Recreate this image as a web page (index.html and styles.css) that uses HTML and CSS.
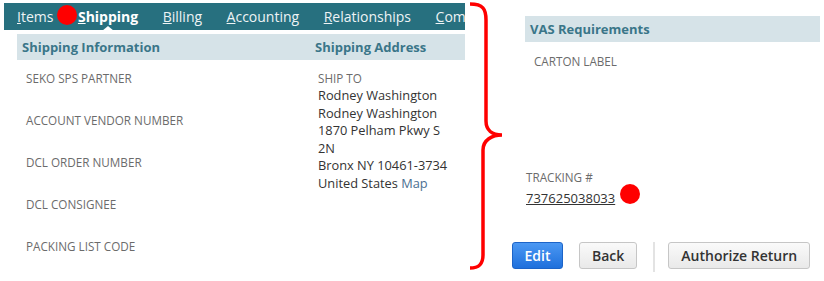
FILE: index.html
```html
<!DOCTYPE html>
<html lang="en">
<head>
  <meta charset="UTF-8" />
  <title>Shipping</title>
  <link rel="stylesheet" href="styles.css">
</head>
<body>
  <div class="page">
    <div class="left">
      <nav class="tabs">
        <span class="tab"><u>I</u>tems</span>
        <span class="tab active"><u>S</u>hipping</span>
        <span class="tab"><u>B</u>illing</span>
        <span class="tab"><u>A</u>ccounting</span>
        <span class="tab"><u>R</u>elationships</span>
        <span class="tab"><u>C</u>om</span>
      </nav>

      <div class="section">
        <div class="band">
          <span class="band-col">Shipping Information</span>
          <span class="band-col">Shipping Address</span>
        </div>
        <div class="fields">
          <div class="field-list">
            <div class="label">SEKO SPS PARTNER</div>
            <div class="label">ACCOUNT VENDOR NUMBER</div>
            <div class="label">DCL ORDER NUMBER</div>
            <div class="label">DCL CONSIGNEE</div>
            <div class="label">PACKING LIST CODE</div>
          </div>
          <div class="address">
            <div class="label">SHIP TO</div>
            <div class="value">
              Rodney Washington<br>
              Rodney Washington<br>
              1870 Pelham Pkwy S<br>
              2N<br>
              Bronx NY 10461-3734<br>
              United States <a href="#" class="map">Map</a>
            </div>
          </div>
        </div>
      </div>
    </div>

    <div class="right">
      <div class="band vas">VAS Requirements</div>
      <div class="label carton">CARTON LABEL</div>

      <div class="tracking">
        <div class="label">TRACKING #</div>
        <a href="#" class="track-num">737625038033</a>
      </div>

      <div class="actions">
        <button class="btn primary">Edit</button>
        <button class="btn">Back</button>
        <span class="divider"></span>
        <button class="btn">Authorize Return</button>
      </div>
    </div>
  </div>

  <!-- annotations drawn over the screenshot -->
  <svg class="marks" width="824" height="281">
    <path d="M470,4 C483,4 486,9 486,20 L486,121 C486,130 492,135 502,135 C492,135 483,140 483,150 L483,255 C483,264 479,268 470,268"
          fill="none" stroke="#f00" stroke-width="3.5" />
  </svg>
  <span class="dot dot-tab"></span>
  <span class="dot dot-track"></span>
</body>
</html>
```

FILE: styles.css
```css
:root {
  --teal: #27707f;
  --band: #d6e3e8;
  --band-text: #3a7689;
  --label: #6b6b6b;
  --text: #333;
}
body {
  margin: 0;
  font-family: 'Open Sans', sans-serif;
  background: #fff;
  color: var(--text);
}
.page {
  display: flex;
  padding: 3px 0 0 4px;
  width: 824px;
  height: 278px;
  box-sizing: border-box;
}
.left {
  width: 461px;
  flex-shrink: 0;
}

/* tabs */
.tabs {
  position: relative;
  display: flex;
  gap: 24.5px;
  height: 27px;
  align-items: center;
  padding-left: 13px;
  background: var(--teal);
  overflow: hidden;
  white-space: nowrap;
  font-size: 14px;
  color: #fff;
}
.tab {
  position: relative;
  opacity: 0.92;
}
.tab.active {
  font-weight: bold;
  opacity: 1;
}
.tab.active::after {
  content: '';
  position: absolute;
  left: 50%;
  bottom: -5px;
  margin-left: -6px;
  border: 6px solid transparent;
  border-bottom: 5px solid #fff;
  border-top: none;
}

/* shipping section */
.section {
  margin: 4px 0 0 13px;
}
.band {
  background: var(--band);
  color: var(--band-text);
  font-weight: bold;
  font-size: 13px;
  height: 26px;
  line-height: 26px;
}
.section .band {
  display: grid;
  grid-template-columns: 293px 1fr;
  padding-left: 5px;
}
.fields {
  display: grid;
  grid-template-columns: 301px 1fr;
  padding-top: 10px;
}
.label {
  font-size: 11.7px;
  color: var(--label);
  line-height: 17px;
}
.field-list {
  padding-left: 9px;
  display: flex;
  flex-direction: column;
  gap: 25px;
}
.address .value {
  font-size: 12.8px;
  line-height: 17.5px;
  color: var(--text);
}
.map {
  color: #4b6f91;
  text-decoration: none;
}

/* right column */
.right {
  margin-left: 46px;
  width: 309px;
  flex-shrink: 0;
}
.vas {
  margin: 13px 0 0 14px;
  padding-left: 5px;
}
.carton {
  margin: 11px 0 0 23px;
}
.tracking {
  margin: 99px 0 0 15px;
}
.track-num {
  font-size: 13px;
  color: var(--text);
  line-height: 19px;
}
.actions {
  display: flex;
  align-items: center;
  gap: 16px;
  margin-top: 30px;
  margin-left: 1px;
  white-space: nowrap;
}
.btn {
  flex-shrink: 0;
  height: 27px;
  padding: 0 12px;
  font-family: 'Open Sans', sans-serif;
  font-size: 14px;
  font-weight: 600;
  color: #333;
  background: linear-gradient(#fafafa, #e9e9e9);
  border: 1px solid #c6c6c6;
  border-radius: 3px;
}
.btn.primary {
  width: 51px;
  padding: 0;
  color: #fff;
  background: linear-gradient(#4b98f3, #1f70dc);
  border-color: #1c64c8;
}
.divider {
  flex-shrink: 0;
  width: 2px;
  height: 30px;
  background: #e3e3e3;
  margin: 4px -3px 0 0;
}

/* annotations */
.marks {
  position: absolute;
  left: 0;
  top: 0;
  pointer-events: none;
}
.dot {
  position: absolute;
  width: 20px;
  height: 20px;
  border-radius: 50%;
  background: #f00;
}
.dot-tab {
  left: 57px;
  top: 5px;
}
.dot-track {
  left: 620px;
  top: 184px;
}
```
